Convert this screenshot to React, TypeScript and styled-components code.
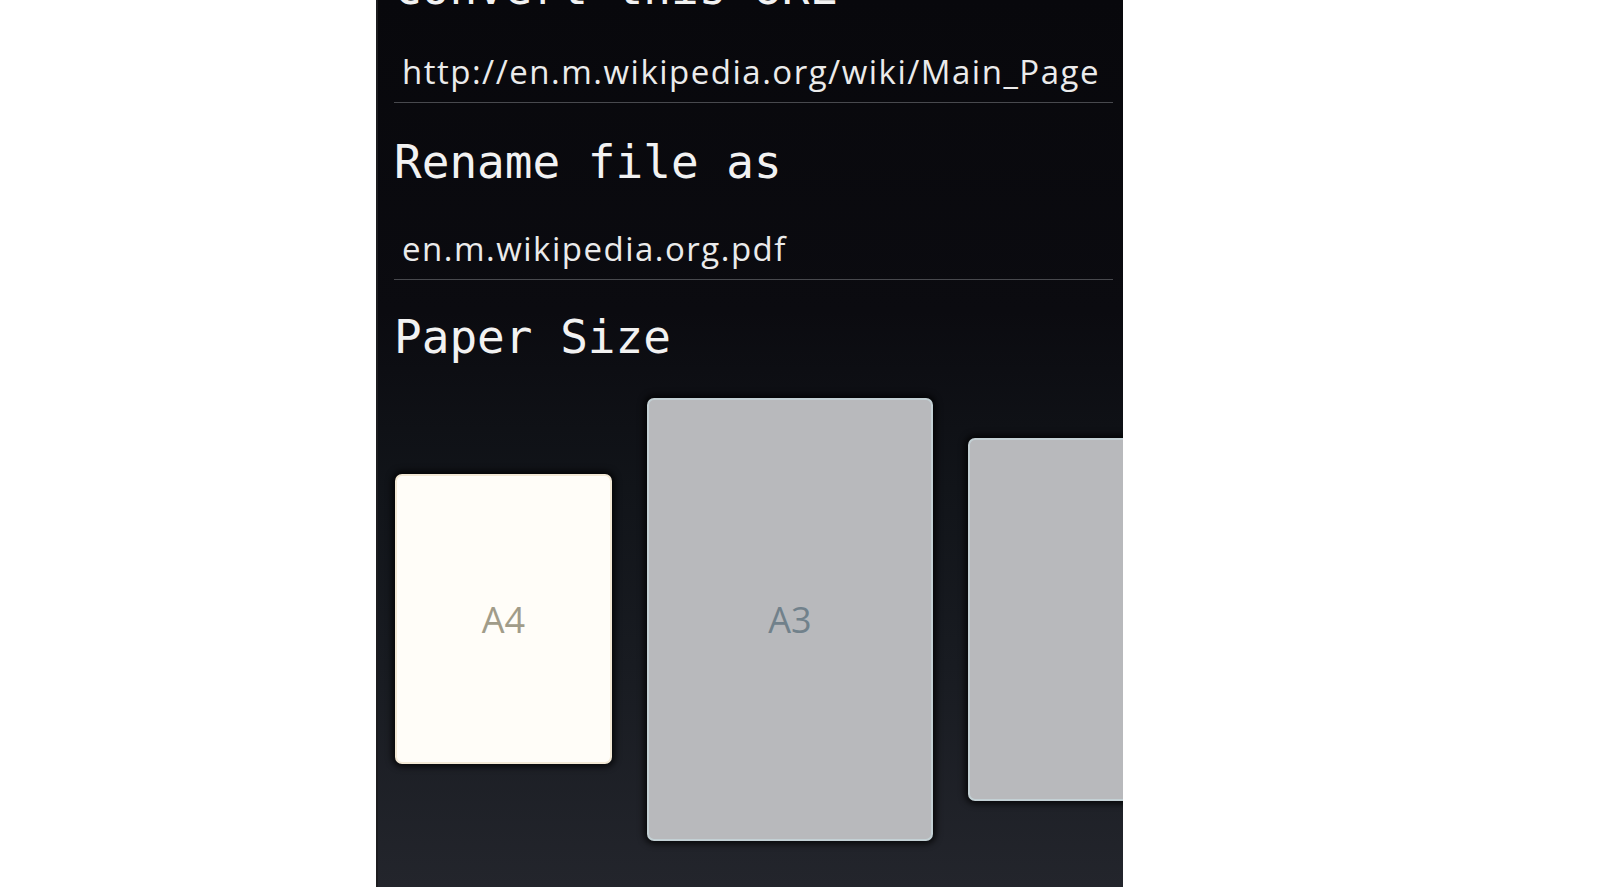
import React from 'react';
import styled, { createGlobalStyle } from 'styled-components';

// type
interface PaperSize {
  label: string;
  width: number;
  height: number;
  selected?: boolean;
}

interface CardProps {
  $w: number;
  $h: number;
  $selected?: boolean;
}

const GlobalStyle = createGlobalStyle`
  html, body {
    margin: 0;
    padding: 0;
    background-color: #ffffff;
    overflow: hidden;
  }
`;

const Page = styled.div`
  width: 1600px;
  height: 887px;
  display: flex;
  padding-left: 376px;
  box-sizing: border-box;
  background-color: #ffffff;
`;

const Screen = styled.div`
  width: 747px;
  height: 887px;
  box-sizing: border-box;
  padding: 0 10px 0 16px;
  overflow: hidden;

  display: flex;
  flex-direction: column;

  border-left: 2px solid #1c1c1f;
  background: linear-gradient(
    180deg,
    #08080c 0%,
    #0b0b10 35%,
    #111419 55%,
    #181b21 75%,
    #23252c 100%
  );
`;

const Heading = styled.div<{ $top: number }>`
  margin-top: ${props => props.$top}px;
  height: 52px;
  font-family: 'DejaVu Sans Mono', 'Liberation Mono', monospace;
  font-size: 46px;
  line-height: 52px;
  color: #f2f2f2;
  white-space: nowrap;
`;

const Field = styled.div<{ $top: number }>`
  margin-top: ${props => props.$top}px;
  padding: 0 0 10px 8px;
  border-bottom: 1px solid #48494e;

  font-family: 'Open Sans', 'Noto Sans', sans-serif;
  font-size: 33px;
  letter-spacing: 1.5px;
  line-height: 40px;
  color: #ebebeb;
  white-space: nowrap;
`;

const CardRow = styled.div`
  margin-top: 26px;
  height: 460px;
  padding-left: 1px;

  display: flex;
  align-items: center;
  gap: 35px;
`;

const Card = styled.div<CardProps>`
  flex: none;
  width: ${props => props.$w}px;
  height: ${props => props.$h}px;
  box-sizing: border-box;

  display: flex;
  align-items: center;
  justify-content: center;

  border-radius: 7px;
  border: 2px solid ${props => (props.$selected ? '#f3e9d6' : '#c3d0d4')};
  background-color: ${props => (props.$selected ? '#fffdf8' : '#b8b9bc')};
  box-shadow: 0 0 6px 3px rgba(0, 0, 0, 0.75);

  font-family: 'Open Sans', 'Noto Sans', sans-serif;
  font-size: 36px;
  color: ${props => (props.$selected ? '#a19c89' : '#71818b')};
  overflow: hidden;
`;

const papers: PaperSize[] = [
  { label: 'A4', width: 217, height: 290, selected: true },
  { label: 'A3', width: 286, height: 443 },
  { label: 'Letter', width: 440, height: 363 },
];

const App: React.FC = () => {
  return (
    <Page>
      <GlobalStyle />
      <Screen>
        <Heading $top={-38}>Convert this URL</Heading>
        <Field $top={38}>http://en.m.wikipedia.org/wiki/Main_Page</Field>
        <Heading $top={33}>Rename file as</Heading>
        <Field $top={41}>en.m.wikipedia.org.pdf</Field>
        <Heading $top={31}>Paper Size</Heading>
        <CardRow>
          {papers.map(paper => (
            <Card
              key={paper.label}
              $w={paper.width}
              $h={paper.height}
              $selected={paper.selected}
            >
              {paper.label}
            </Card>
          ))}
        </CardRow>
      </Screen>
    </Page>
  );
};

export default App;
